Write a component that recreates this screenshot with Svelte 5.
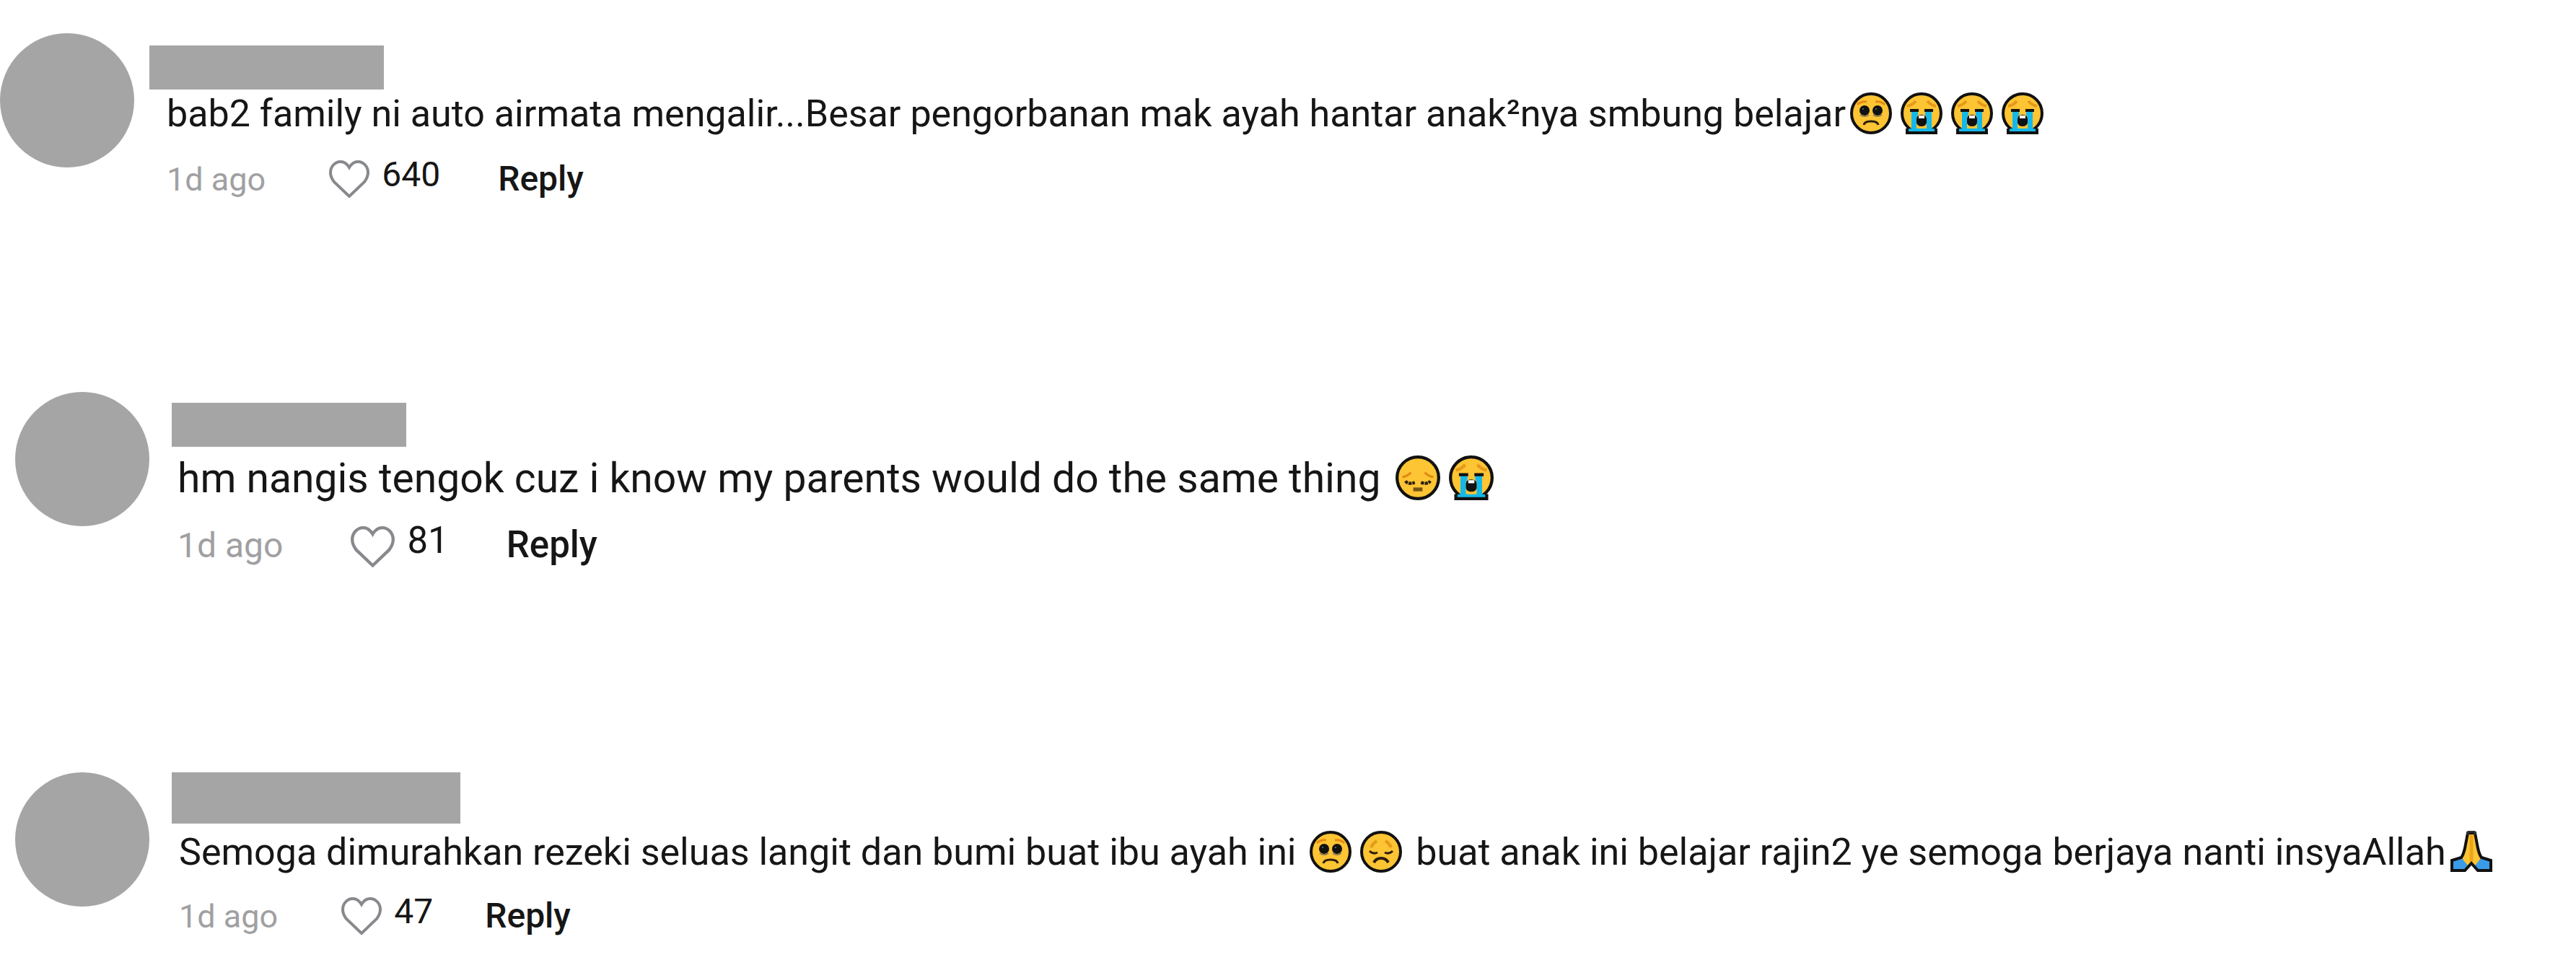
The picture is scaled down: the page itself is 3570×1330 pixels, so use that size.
<script lang="ts">

  type Emoji = 'pleading' | 'crying' | 'pensive' | 'disappointed' | 'pray';
  type Part = string | { emoji: Emoji };
  type Comment = { id: string; age: string; likes: number; parts: Part[] };

  // Initializations:
  const comments: Comment[] = [
    {
      id: 'first',
      age: '1d ago',
      likes: 640,
      parts: [
        'bab2 family ni auto airmata mengalir...Besar pengorbanan mak ayah hantar anak²nya smbung belajar',
        { emoji: 'pleading' }, { emoji: 'crying' }, { emoji: 'crying' }, { emoji: 'crying' }
      ]
    },
    {
      id: 'second',
      age: '1d ago',
      likes: 81,
      parts: ['hm nangis tengok cuz i know my parents would do the same thing ', { emoji: 'pensive' }, { emoji: 'crying' }]
    },
    {
      id: 'third',
      age: '1d ago',
      likes: 47,
      parts: [
        'Semoga dimurahkan rezeki seluas langit dan bumi buat ibu ayah ini ',
        { emoji: 'pleading' }, { emoji: 'disappointed' },
        ' buat anak ini belajar rajin2 ye semoga berjaya nanti insyaAllah',
        { emoji: 'pray' }
      ]
    }
  ];

</script>

<!-- #################################################################################################### -->

{#snippet face()}
  <circle cx="29" cy="29" r="27" fill="#fdc433" stroke="#111" stroke-width="4" />
{/snippet}

{#snippet emojiIcon(name: Emoji)}
  <svg class="emoji" viewBox="0 0 58 58" role="img" aria-label={name}>
    {#if name === 'pleading'}
      {@render face()}
      <path d="M10 17q5-5 13-4M35 13q8-1 13 4" fill="none" stroke="#e58a12" stroke-width="3" />
      <circle cx="20" cy="25" r="7" fill="#111" />
      <circle cx="38" cy="25" r="7" fill="#111" />
      <path d="M14 31q6 4 12 0M32 31q6 4 12 0" fill="none" stroke="#8a7a55" stroke-width="2" />
      <circle cx="18" cy="23" r="1" fill="#777" />
      <circle cx="36" cy="23" r="1" fill="#777" />
      <path d="M19 45q1-5 10-5t10 5" fill="none" stroke="#2b1d10" stroke-width="3" />
    {:else if name === 'crying'}
      {@render face()}
      <path d="M9 19q7-1 12-7M37 12q5 6 12 7" fill="none" stroke="#e59a1b" stroke-width="4" />
      <path d="M15 26h9v24h10V26h9v24l7 1v5H8v-5l7-1z" fill="#13b9ea" />
      <path d="M13 25h12M33 25h12" stroke="#111" stroke-width="4" />
      <path d="M22 50V36q0-6 7-6t7 6v14z" fill="#fdc433" />
      <path d="M22 42V37q0-6 7-6t7 6v5q-1 5-7 5t-7-5z" fill="#111" />
      <path d="M25 32h8v4h-8z" fill="#fff" />
      <path d="M9 50v6h40v-6" fill="none" stroke="#111" stroke-width="4" />
    {:else if name === 'pensive'}
      {@render face()}
      <path d="M9 28q6-1 11-6M38 22q5 5 11 6" fill="none" stroke="#e08a16" stroke-width="3" />
      <path d="M13 33q3 5 12 2M33 35q9 3 12-2" fill="none" stroke="#2b1d10" stroke-width="4" stroke-dasharray="4 1" />
      <path d="M23 44h12" stroke="#7a5518" stroke-width="5" />
    {:else if name === 'disappointed'}
      {@render face()}
      <path d="M15 23q3-6 8-9M35 14q5 3 8 9" fill="none" stroke="#e59a1b" stroke-width="4" />
      <path d="M13 28q5 5 11 2M34 30q6 3 11-2" fill="none" stroke="#2b1d10" stroke-width="3" />
      <path d="M19 44q3-6 10-6t10 6" fill="none" stroke="#2b1d10" stroke-width="4" />
    {:else}
      <path d="M24 3L20 24l-5 13-13 4v14h20l7-9 7 9h20V41l-13-4-5-13-4-21z" fill="#fdc433" />
      <path d="M15 37L2 41v14h19l3-7zM43 37l13 4v14H37l-3-7z" fill="#3a9be6" />
      <path d="M29 5v38" stroke="#eba51c" stroke-width="5" />
      <path d="M24 3L20 24q-2 9-5 13L2 41v14h18l9-10 9 10h18V41l-13-4q-3-4-5-13L34 3z" fill="none" stroke="#111" stroke-width="4" />
      <path d="M23 5l2-4h8l2 4" fill="none" stroke="#333" stroke-width="3" />
    {/if}
  </svg>
{/snippet}

<!-- Comment List -->
<main>
  {#each comments as comment (comment.id)}
    <article class={comment.id}>
      <div class="avatar"></div>
      <div class="content">
        <div class="username"></div>
        <div class="body">
          <p>{#each comment.parts as part}{#if typeof part === 'string'}{part}{:else}{@render emojiIcon(part.emoji)}{/if}{/each}</p>
          <div class="actions">
            <span class="age">{comment.age}</span>
            <button class="like" aria-label="Like, {comment.likes}">
              <svg class="heart" viewBox="0 0 56 52" aria-hidden="true">
                <path d="M28 10C25 5 21 2 16 2C8 2 2 9 2 17c0 5 2 9 5 13L28 50l21-20c3-4 5-8 5-13C54 9 48 2 40 2c-5 0-9 3-12 8z" />
              </svg>
              <span>{comment.likes}</span>
            </button>
            <button class="reply">Reply</button>
          </div>
        </div>
      </div>
    </article>
  {/each}
</main>

<!-- #################################################################################################### -->

<style>

  :global(body) {
    background: #fff;
  }

  main {
    display: flex;
    flex-direction: column;
    padding-top: 46px;
    font-family: Roboto, "Liberation Sans", sans-serif;
    color: #161616;
  }

  article {
    --text: 52px;
    --line: 68px;
    --age: 45px;
    --action: 48px;
    --heart: 56px;
    --emoji: 58px;
    display: flex;
    align-items: flex-start;
    gap: 31px;
    padding-left: 21px;
  }

  div.avatar {
    flex-shrink: 0;
    width: 186px;
    height: 186px;
    border-radius: 50%;
    background: #a5a5a5;
  }

  div.content {
    flex: 1;
    min-width: 0;
  }

  div.username {
    width: 325px;
    height: 61px;
    background: #a5a5a5;
  }

  div.body {
    padding-left: 10px;
  }

  p {
    margin: 0;
    font-size: var(--text);
    line-height: var(--line);
  }

  svg.emoji {
    width: var(--emoji);
    height: var(--emoji);
    margin: 0 6px;
    vertical-align: -11px;
  }

  div.actions {
    display: flex;
    align-items: flex-start;
    margin-top: 12px;
    font-size: var(--action);
    line-height: 60px;
  }

  span.age {
    padding-top: 7px;
    font-size: var(--age);
    color: #a0a0a2;
  }

  button {
    padding: 0;
    border: none;
    background: none;
    font: inherit;
    color: inherit;
    cursor: pointer;
  }

  button.like {
    display: flex;
    gap: 17px;
    margin-left: 88px;
  }

  button.reply {
    margin-left: 72px;
    padding-top: 6px;
    font-weight: 500;
  }

  svg.heart {
    width: var(--heart);
    margin-top: 10px;
    fill: none;
    stroke: #88898d;
    stroke-width: 4;
  }

  article.first {
    gap: 21px;
    padding-left: 0;
  }

  article.first div.content {
    padding-top: 17px;
  }

  article.first div.body {
    padding-left: 24px;
  }

  article.first div.actions {
    margin-top: 20px;
  }

  article.first button.reply {
    margin-left: 80px;
  }

  article.second {
    --text: 57px;
    --line: 88px;
    --age: 48px;
    --action: 51px;
    --heart: 61px;
    --emoji: 62px;
    margin-top: 264px;
  }

  article.second div.content {
    padding-top: 15px;
  }

  article.second div.body {
    padding-left: 8px;
  }

  article.second button.like {
    margin-left: 94px;
  }

  article.second button.reply {
    margin-left: 80px;
  }

  article.third {
    --line: 80px;
    margin-top: 284px;
  }

  article.third div.username {
    width: 400px;
    height: 71px;
  }

</style>
